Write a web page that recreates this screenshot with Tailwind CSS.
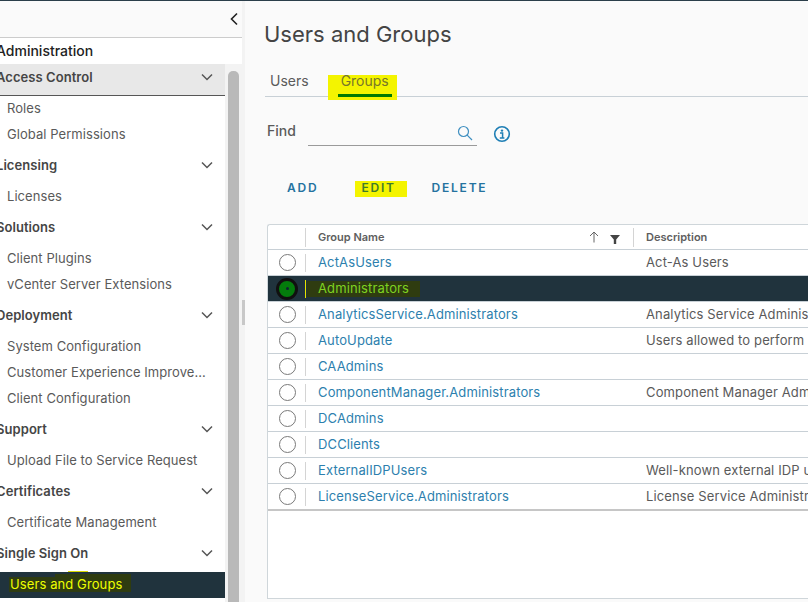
<!DOCTYPE html>
<html><head><meta charset="utf-8"><script src="https://cdn.jsdelivr.net/npm/@tailwindcss/browser@4"></script></head>
<body class="w-[808px] h-[602px] overflow-hidden bg-[#fafafa] font-['Inter','Noto_Sans',sans-serif] text-[13px] text-[#5a5a5a]">
<div class="h-px bg-[#2b3e4a]"></div>
<div class="flex h-[601px]">
  <aside class="w-[242px] shrink-0 flex flex-col bg-white">
    <div class="h-[37px] shrink-0 bg-[#fafafa] border-b border-[#cccccc] flex justify-end items-center pr-[2px]">
      <svg width="12" height="14" viewBox="0 0 12 14" fill="none" stroke="#222" stroke-width="1.6"><path d="M9 1.5 3.5 7 9 12.5"/></svg>
    </div>
    <div class="h-[26px] shrink-0 -ml-[4px] pb-[2px] flex items-center text-[14px] font-medium text-[#222]">Administration</div>
    <div class="flex min-h-0 flex-1">
      <nav class="w-[225px] shrink-0 overflow-hidden tracking-[0.06px]">
        <div class="h-[32px] bg-[#e8e8e8] border-b border-[#565656] flex justify-between font-semibold text-[#454545] -mb-px pr-[11px]"><span class="-ml-[4px] leading-[26px]">Access Control</span><svg class="mt-[9px]" width="14" height="9" viewBox="0 0 14 9" fill="none" stroke="#555" stroke-width="1.5"><path d="M2 1.5 7 6.5 12 1.5"/></svg></div>
        <div class="h-[26px] pl-[7px] leading-[26px]">Roles</div>
        <div class="h-[26px] pl-[7px] leading-[26px]">Global Permissions</div>
        <div class="h-[31px] mt-[5px] flex justify-between font-semibold text-[#454545] pr-[11px]"><span class="-ml-[4px] leading-[26px]">Licensing</span><svg class="mt-[9px]" width="14" height="9" viewBox="0 0 14 9" fill="none" stroke="#555" stroke-width="1.5"><path d="M2 1.5 7 6.5 12 1.5"/></svg></div>
        <div class="h-[26px] pl-[7px] leading-[26px]">Licenses</div>
        <div class="h-[31px] mt-[5px] flex justify-between font-semibold text-[#454545] pr-[11px]"><span class="-ml-[4px] leading-[26px]">Solutions</span><svg class="mt-[9px]" width="14" height="9" viewBox="0 0 14 9" fill="none" stroke="#555" stroke-width="1.5"><path d="M2 1.5 7 6.5 12 1.5"/></svg></div>
        <div class="h-[26px] pl-[7px] leading-[26px]">Client Plugins</div>
        <div class="h-[26px] pl-[7px] leading-[26px]">vCenter Server Extensions</div>
        <div class="h-[31px] mt-[5px] flex justify-between font-semibold text-[#454545] pr-[11px]"><span class="-ml-[4px] leading-[26px]">Deployment</span><svg class="mt-[9px]" width="14" height="9" viewBox="0 0 14 9" fill="none" stroke="#555" stroke-width="1.5"><path d="M2 1.5 7 6.5 12 1.5"/></svg></div>
        <div class="h-[26px] pl-[7px] leading-[26px]">System Configuration</div>
        <div class="h-[26px] pl-[7px] leading-[26px]">Customer Experience Improve...</div>
        <div class="h-[26px] pl-[7px] leading-[26px]">Client Configuration</div>
        <div class="h-[31px] mt-[5px] flex justify-between font-semibold text-[#454545] pr-[11px]"><span class="-ml-[4px] leading-[26px]">Support</span><svg class="mt-[9px]" width="14" height="9" viewBox="0 0 14 9" fill="none" stroke="#555" stroke-width="1.5"><path d="M2 1.5 7 6.5 12 1.5"/></svg></div>
        <div class="h-[26px] pl-[7px] leading-[26px]">Upload File to Service Request</div>
        <div class="h-[31px] mt-[5px] flex justify-between font-semibold text-[#454545] pr-[11px]"><span class="-ml-[4px] leading-[26px]">Certificates</span><svg class="mt-[9px]" width="14" height="9" viewBox="0 0 14 9" fill="none" stroke="#555" stroke-width="1.5"><path d="M2 1.5 7 6.5 12 1.5"/></svg></div>
        <div class="h-[26px] pl-[7px] leading-[26px]">Certificate Management</div>
        <div class="h-[31px] mt-[5px] flex justify-between font-semibold text-[#454545] pr-[11px]"><span class="-ml-[4px] leading-[26px]">Single Sign On</span><svg class="mt-[9px]" width="14" height="9" viewBox="0 0 14 9" fill="none" stroke="#555" stroke-width="1.5"><path d="M2 1.5 7 6.5 12 1.5"/></svg></div>
        <div class="h-[26px] mt-px bg-[#20333d] relative">
          <div class="absolute left-[9px] top-[5px] w-[122px] h-[15px] bg-[#2f3c10]"></div>
          <div class="absolute left-[55px] top-[2px] w-[76px] h-[4px] bg-[#2f3c10]"></div>
          <div class="absolute left-[68px] -top-px w-[20px] h-px bg-[#d8d800]"></div>
          <span class="absolute left-[10px] top-[1px] leading-[22px] tracking-[0.1px] text-[#eeff00]">Users and Groups</span>
        </div>
      </nav>
      <div class="flex-1 pl-[3px] pr-[3px] pt-[7px] bg-[#f3f3f3]"><div class="h-full rounded-t-[5px] bg-[#b9b9b9]"></div></div>
    </div>
  </aside>
  <div class="w-[3px] shrink-0 bg-[#f3f3f3] flex items-start"><div class="mt-[299px] h-[25px] w-[3px] bg-[#c8c8c8]"></div></div>
  <main class="flex-1 min-w-0 pl-[20px] flex flex-col">
    <h1 class="h-[44px] mt-[11px] -ml-px text-[22px] leading-[44px] font-normal text-[#444]">Users and Groups</h1>
    <div class="h-[41px] border-b border-[#c8d0d6] flex items-start text-[14px]">
      <span class="mt-[15px] ml-[5px] leading-[20px]">Users</span>
      <div class="ml-[19px] w-[69px] h-[25px] mt-[19px] bg-[#f4f400] relative">
        <span class="absolute left-[13px] -top-[4px] leading-[20px] text-[#77772a]">Groups</span>
        <div class="absolute left-[10px] top-[19px] w-[54px] h-[3px] bg-[#007a00]"></div>
      </div>
    </div>
    <div class="h-[50px] mt-[12px] flex items-start">
      <span class="ml-[2px] mt-[12px] text-[14px] font-medium leading-[20px]">Find</span>
      <div class="ml-[12px] w-[169px] h-[37px] border-b border-[#9a9a9a] relative">
        <svg class="absolute right-[4px] top-[16px]" width="16" height="16" viewBox="0 0 16 16" fill="none" stroke="#3f8fc0" stroke-width="1.2"><circle cx="6.500" cy="6.500" r="5"/><path d="M10.200 10.200 15 15"/></svg>
      </div>
      <svg class="ml-[16px] mt-[16px]" width="18" height="18" viewBox="0 0 18 18" fill="none"><circle cx="9" cy="9" r="7.300" stroke="#1f7fb5" stroke-width="1.600"/><circle cx="9" cy="5.600" r="1.200" fill="#1f7fb5"/><path d="M7 8h2.600v4.500M6.800 13h4.600" stroke="#1f7fb5" stroke-width="1.500"/></svg>
    </div>
    <div class="h-[33px] mt-[12px] flex items-center text-[12px] font-semibold tracking-[1.8px] text-[#24729f]">
      <span class="ml-[22px]">ADD</span>
      <div class="ml-[37px] w-[52px] h-[16px] mt-[3px] pl-[6px] leading-[14px] bg-[#f4f400] text-[#3f7a2c]">EDIT</div>
      <span class="ml-[24px]">DELETE</span>
    </div>
    <div class="mt-[20px] ml-[2px] h-[375px] bg-white border border-[#cfd6da] border-r-0 rounded-tl-[3px] flex flex-col whitespace-nowrap tracking-[0.13px]">
      <div class="h-[25px] shrink-0 border-b border-[#c8d0d6] flex items-center text-[11px] font-semibold text-[#5e5e5e] tracking-normal">
        <div class="w-[38px] shrink-0 h-[19px] border-r border-[#d4d4d4]"></div>
        <div class="w-[328px] shrink-0 h-[19px] border-r border-[#d4d4d4] flex items-center pl-[12px] relative"><span>Group Name</span>
          <svg class="absolute left-[283px] top-[3px]" width="10" height="12" viewBox="0 0 10 12" fill="none" stroke="#666" stroke-width="1"><path d="M5 11.500V1M1 5 5 1l4 4"/></svg>
          <svg class="absolute left-[304px] top-[7px]" width="10" height="9" viewBox="0 0 10 9" fill="#444"><path d="M0 0h10L6.200 4.500V9H3.800V4.500Z"/></svg>
        </div>
        <div class="pl-[12px]">Description</div>
      </div>
      <div class="h-[26px] shrink-0 border-b border-[#c8d0d6] flex items-center"><div class="w-[38px] shrink-0 h-[18px] border-r border-[#d4d4d4] pl-[11px]"><div class="w-[17px] h-[17px] rounded-full border border-[#7a7a7a] bg-white"></div></div><div class="w-[328px] shrink-0 pl-[12px] text-[#2d7fae]">ActAsUsers</div><div class="pl-[12px]">Act-As Users</div></div>
      <div class="h-[26px] shrink-0 border-b border-[#c8d0d6] bg-[#20333d] flex items-center"><div class="w-[38px] shrink-0 h-[18px] border-r border-[#e6e600] relative"><div class="absolute left-[8px] -top-[2px] w-[22px] h-[22px] rounded-full border-[3px] border-[#101010] bg-[#047c0c] flex items-center justify-center"><div class="w-[3px] h-[3px] rounded-full bg-[#123]"></div></div></div><div class="ml-px pl-[11px] w-[113px] h-[16px] leading-[15px] bg-[#2f3c10] text-[#7ed321]">Administrators</div></div>
      <div class="h-[26px] shrink-0 border-b border-[#c8d0d6] flex items-center"><div class="w-[38px] shrink-0 h-[18px] border-r border-[#d4d4d4] pl-[11px]"><div class="w-[17px] h-[17px] rounded-full border border-[#7a7a7a] bg-white"></div></div><div class="w-[328px] shrink-0 pl-[12px] text-[#2d7fae]">AnalyticsService.Administrators</div><div class="pl-[12px]">Analytics Service Administrators</div></div>
      <div class="h-[26px] shrink-0 border-b border-[#c8d0d6] flex items-center"><div class="w-[38px] shrink-0 h-[18px] border-r border-[#d4d4d4] pl-[11px]"><div class="w-[17px] h-[17px] rounded-full border border-[#7a7a7a] bg-white"></div></div><div class="w-[328px] shrink-0 pl-[12px] text-[#2d7fae]">AutoUpdate</div><div class="pl-[12px]">Users allowed to perform</div></div>
      <div class="h-[26px] shrink-0 border-b border-[#c8d0d6] flex items-center"><div class="w-[38px] shrink-0 h-[18px] border-r border-[#d4d4d4] pl-[11px]"><div class="w-[17px] h-[17px] rounded-full border border-[#7a7a7a] bg-white"></div></div><div class="w-[328px] shrink-0 pl-[12px] text-[#2d7fae]">CAAdmins</div></div>
      <div class="h-[26px] shrink-0 border-b border-[#c8d0d6] flex items-center"><div class="w-[38px] shrink-0 h-[18px] border-r border-[#d4d4d4] pl-[11px]"><div class="w-[17px] h-[17px] rounded-full border border-[#7a7a7a] bg-white"></div></div><div class="w-[328px] shrink-0 pl-[12px] text-[#2d7fae]">ComponentManager.Administrators</div><div class="pl-[12px]">Component Manager Administrators</div></div>
      <div class="h-[26px] shrink-0 border-b border-[#c8d0d6] flex items-center"><div class="w-[38px] shrink-0 h-[18px] border-r border-[#d4d4d4] pl-[11px]"><div class="w-[17px] h-[17px] rounded-full border border-[#7a7a7a] bg-white"></div></div><div class="w-[328px] shrink-0 pl-[12px] text-[#2d7fae]">DCAdmins</div></div>
      <div class="h-[26px] shrink-0 border-b border-[#c8d0d6] flex items-center"><div class="w-[38px] shrink-0 h-[18px] border-r border-[#d4d4d4] pl-[11px]"><div class="w-[17px] h-[17px] rounded-full border border-[#7a7a7a] bg-white"></div></div><div class="w-[328px] shrink-0 pl-[12px] text-[#2d7fae]">DCClients</div></div>
      <div class="h-[26px] shrink-0 border-b border-[#c8d0d6] flex items-center"><div class="w-[38px] shrink-0 h-[18px] border-r border-[#d4d4d4] pl-[11px]"><div class="w-[17px] h-[17px] rounded-full border border-[#7a7a7a] bg-white"></div></div><div class="w-[328px] shrink-0 pl-[12px] text-[#2d7fae]">ExternalIDPUsers</div><div class="pl-[12px]">Well-known external IDP users</div></div>
      <div class="h-[27px] shrink-0 border-b-2 border-[#c6c6c6] flex items-center"><div class="w-[38px] shrink-0 h-[18px] border-r border-[#d4d4d4] pl-[11px]"><div class="w-[17px] h-[17px] rounded-full border border-[#7a7a7a] bg-white"></div></div><div class="w-[328px] shrink-0 pl-[12px] text-[#2d7fae]">LicenseService.Administrators</div><div class="pl-[12px]">License Service Administrators</div></div>
      <div class="flex-1"></div>
    </div>
  </main>
</div>
</body></html>
